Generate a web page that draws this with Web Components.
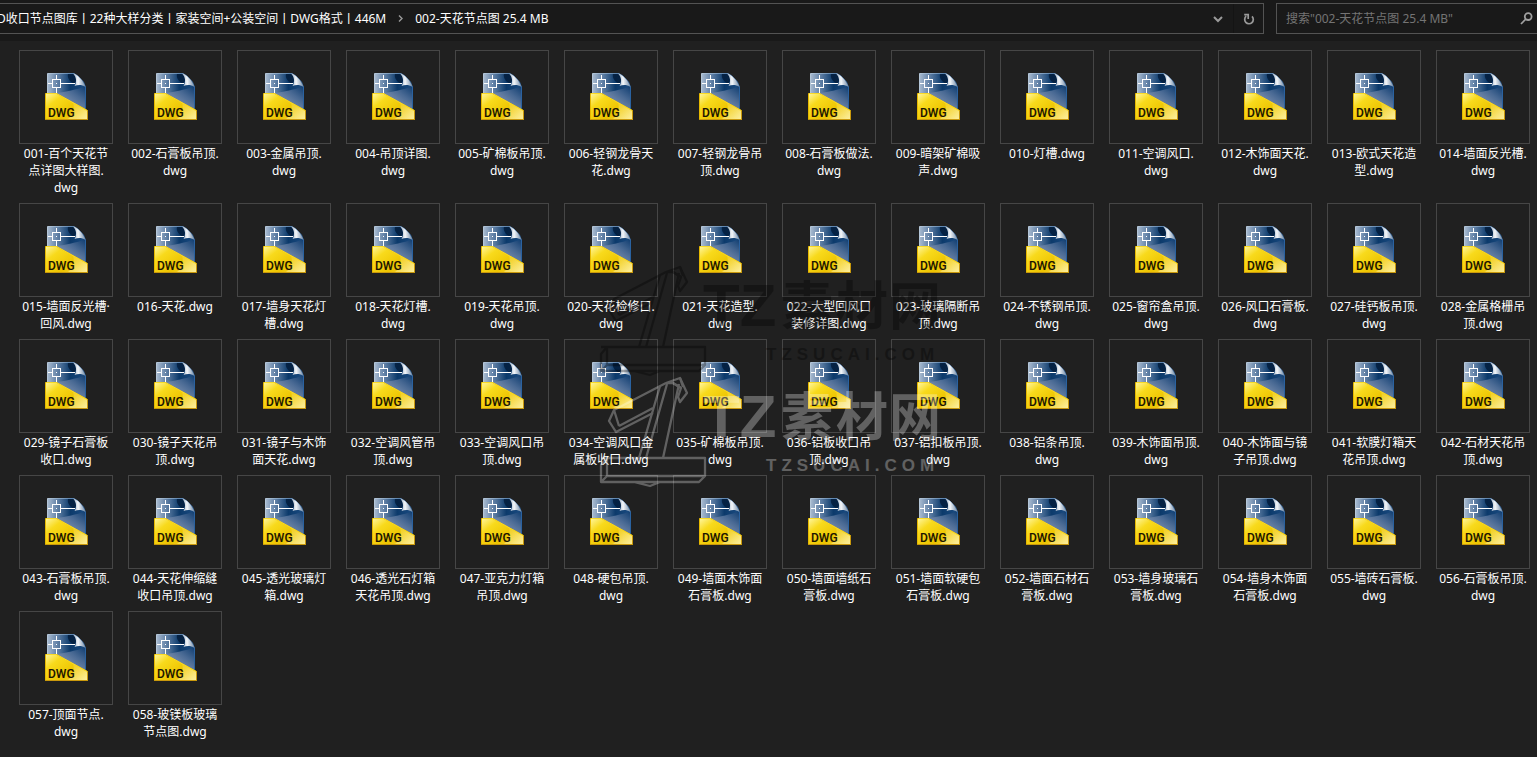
<!DOCTYPE html>
<html lang="zh-CN">
<head>
<meta charset="utf-8">
<meta name="viewport" content="width=device-width, initial-scale=1">
<title>002-天花节点图 25.4 MB</title>
<style>
  html, body { margin: 0; min-height: 100%; background: #202020; }
  body { font: 12px/17px "Noto Sans", "Noto Sans CJK SC", sans-serif; color: #fff; overflow-x: hidden; }
</style>
</head>
<body>
<explorer-window>
  <address-bar slot="bar"></address-bar>
  <search-box slot="bar"></search-box>
  <file-grid></file-grid>
  <water-mark slot="overlay"></water-mark>
</explorer-window>

<script>
const define = (name, html, setup) => {
  const template = document.createElement('template');
  template.innerHTML = html;
  customElements.define(name, class extends HTMLElement {
    constructor() {
      super();
      this.attachShadow({ mode: 'open' }).append(template.content.cloneNode(true));
      if (setup) setup(this.shadowRoot);
    }
  });
};

define('explorer-window', `
  <style>
    :host { display: block; position: relative; min-height: 100vh; background: #202020; overflow: hidden; }
    header { display: flex; gap: 12px; height: 31px; padding: 3px 0 7px; background: #191919; }
    main { padding: 9px 0 17px 19px; }
  </style>
  <header><slot name="bar"></slot></header>
  <main><slot></slot></main>
  <slot name="overlay"></slot>`);

define('address-bar', `
  <style>
    :host { display: flex; flex: 1; min-width: 0; box-sizing: border-box; border: 1px solid #535353; border-left: 0; overflow: hidden; }
    nav { display: flex; flex: 1; align-items: center; gap: 10px; margin-left: -3px; padding-bottom: 1px; min-width: 0; white-space: nowrap; }
    a { color: #fff; text-decoration: none; }
    button { width: 30px; padding: 0; border: 0; background: none; display: flex; align-items: center; justify-content: center; }
    .refresh { border-left: 1px solid #141414; }
    svg { display: block; fill: none; stroke: #9a9a9a; }
  </style>
  <nav aria-label="地址">
    <a href="#library">D收口节点图库丨22种大样分类丨家装空间+公装空间丨DWG格式丨446M</a>
    <svg width="9" height="9" viewBox="0 0 9 9" stroke-width="1.4"><path d="M3 1.5 6 4.5 3 7.5"/></svg>
    <a href="#folder">002-天花节点图 25.4 MB</a>
  </nav>
  <button type="button" aria-label="上一个位置"><svg width="10" height="10" viewBox="0 0 10 10" stroke-width="2"><path d="M1 3 5 7 9 3"/></svg></button>
  <button type="button" class="refresh" aria-label="刷新"><svg width="12" height="14" viewBox="0 0 12 14" stroke-width="1.7"><path d="M3.2 4.2A4.3 4.3 0 1 0 9 4.4M1.2 2.7H5.2V7"/></svg></button>`);

define('search-box', `
  <style>
    :host { display: flex; align-items: center; flex: 0 0 261px; box-sizing: border-box; border: 1px solid #535353; border-right: 0; padding: 0 4px 0 9px; }
    input { flex: 1; min-width: 0; padding: 0; border: 0; outline: 0; background: none; font: inherit; color: #fff; }
    input::placeholder { color: #747474; opacity: 1; }
    button { padding: 0; border: 0; background: none; }
    svg { display: block; fill: none; stroke: #a0a0a0; }
  </style>
  <input type="search" aria-label="搜索" placeholder='搜索"002-天花节点图 25.4 MB"'>
  <button type="button" aria-label="开始搜索"><svg width="13" height="13" viewBox="0 0 13 13" stroke-width="1.8"><circle cx="8.2" cy="4.6" r="3.4"/><path d="M5.8 7 1 12"/></svg></button>`);

define('dwg-icon', `
  <style>
    :host { display: block; width: 44px; height: 48px; }
    svg { display: block; }
    text { font: 500 12px Roboto, sans-serif; fill: #1a1400; stroke: #1a1400; stroke-width: .1; }
  </style>
  <svg width="44" height="48" viewBox="-1 0 44 48" aria-hidden="true">
    <defs>
      <linearGradient id="sheet" x1="0" y1="0" x2="1" y2="0">
        <stop offset="0" stop-color="#a9bbd0"/><stop offset=".25" stop-color="#6483a8"/>
        <stop offset=".6" stop-color="#0c3a6b"/><stop offset="1" stop-color="#1b4c82"/>
      </linearGradient>
      <linearGradient id="sheen" x1="1" y1="0" x2=".3" y2=".8">
        <stop offset="0" stop-color="#123f72"/><stop offset=".45" stop-color="#4a6a94"/><stop offset="1" stop-color="#8496b3"/>
      </linearGradient>
      <linearGradient id="edge" x1="0" y1="0" x2="1" y2="0">
        <stop offset="0" stop-color="#b4c6d8"/><stop offset="1" stop-color="#2a5e96"/>
      </linearGradient>
      <linearGradient id="curl" x1="0" y1=".5" x2="1" y2=".45">
        <stop offset="0" stop-color="#8fa3ba"/><stop offset=".4" stop-color="#f4f7fa"/><stop offset="1" stop-color="#6d87a5"/>
      </linearGradient>
      <linearGradient id="gold" x1="0" y1="0" x2="1" y2=".8">
        <stop offset="0" stop-color="#fff6a0"/><stop offset=".28" stop-color="#f8da1c"/><stop offset=".7" stop-color="#edc400"/><stop offset="1" stop-color="#f3d64a"/>
      </linearGradient>
      <linearGradient id="glow" x1="0" y1="0" x2="1" y2="1">
        <stop offset="0" stop-color="#f2cb10"/><stop offset="1" stop-color="#fff6b5"/>
      </linearGradient>
    </defs>
    <path d="M2.500 .500H29L33 3 38.500 9 40.500 14V40H2.500Z" fill="url(#sheet)" stroke="url(#edge)"/>
    <path d="M12 20C20 19 32 16.500 40 13.500V38Z" fill="url(#sheen)"/>
    <path d="M40.500 14V37" stroke="#2a62a0"/>
    <path d="M23 1H29C31.500 4 31.500 8 29.500 11C25 9 22 5 23 1Z" fill="#031c3a" opacity=".8"/>
    <path d="M28 .500C33 1.500 38.500 8 40.500 14C37 11.500 33 11.500 29.500 13C32 9 31.500 4 28 .500Z" fill="url(#curl)"/>
    <path d="M3 10.500H7.500M15.500 10.500H30M11.500 2V6.500M11.500 14.500V20" stroke="#fff" fill="none"/>
    <rect x="7.500" y="6.500" width="8" height="8" fill="none" stroke="#fff"/>
    <rect x="11" y="10" width="1" height="1" fill="#fff"/>
    <path d="M.5 20.500H11.500L42.500 37.500V46.500H.5Z" fill="url(#gold)" stroke="#e6b800"/>
    <path d="M28 30 42 38V46H23C28 42 30 36 28 30Z" fill="url(#glow)" opacity=".75"/>
    <path d="M1 20.500H11.500L42 37.500" fill="none" stroke="#ffe22e" stroke-width=".8"/>
    <path d="M.5 46.500H42.500V38" fill="none" stroke="#c9980c"/>
    <text x="3" y="44">DWG</text>
  </svg>`);

define('file-tile', `
  <style>
    :host { display: block; }
    figure { margin: 0; }
    .thumb { display: flex; align-items: center; justify-content: center; box-sizing: border-box; height: 94px; border: 1px solid #464646; }
    figcaption { margin-top: 1px; min-height: 34px; text-align: center; white-space: nowrap; }
    ::slotted(span) { display: block; }
  </style>
  <figure>
    <div class="thumb"><dwg-icon></dwg-icon></div>
    <figcaption><slot></slot></figcaption>
  </figure>`);

/* File names, one array entry per file; "/" marks where a name wraps. */
const files = [
  '001-百个天花节/点详图大样图./dwg', '002-石膏板吊顶./dwg', '003-金属吊顶./dwg', '004-吊顶详图./dwg', '005-矿棉板吊顶./dwg',
  '006-轻钢龙骨天/花.dwg', '007-轻钢龙骨吊/顶.dwg', '008-石膏板做法./dwg', '009-暗架矿棉吸/声.dwg', '010-灯槽.dwg',
  '011-空调风口./dwg', '012-木饰面天花./dwg', '013-欧式天花造/型.dwg', '014-墙面反光槽./dwg',
  '015-墙面反光槽·/回风.dwg', '016-天花.dwg', '017-墙身天花灯/槽.dwg', '018-天花灯槽./dwg', '019-天花吊顶./dwg',
  '020-天花检修口./dwg', '021-天花造型./dwg', '022-大型回风口/装修详图.dwg', '023-玻璃隔断吊/顶.dwg', '024-不锈钢吊顶./dwg',
  '025-窗帘盒吊顶./dwg', '026-风口石膏板./dwg', '027-硅钙板吊顶./dwg', '028-金属格栅吊/顶.dwg',
  '029-镜子石膏板/收口.dwg', '030-镜子天花吊/顶.dwg', '031-镜子与木饰/面天花.dwg', '032-空调风管吊/顶.dwg', '033-空调风口吊/顶.dwg',
  '034-空调风口金/属板收口.dwg', '035-矿棉板吊顶./dwg', '036-铝板收口吊/顶.dwg', '037-铝扣板吊顶./dwg', '038-铝条吊顶./dwg',
  '039-木饰面吊顶./dwg', '040-木饰面与镜/子吊顶.dwg', '041-软膜灯箱天/花吊顶.dwg', '042-石材天花吊/顶.dwg',
  '043-石膏板吊顶./dwg', '044-天花伸缩缝/收口吊顶.dwg', '045-透光玻璃灯/箱.dwg', '046-透光石灯箱/天花吊顶.dwg', '047-亚克力灯箱/吊顶.dwg',
  '048-硬包吊顶./dwg', '049-墙面木饰面/石膏板.dwg', '050-墙面墙纸石/膏板.dwg', '051-墙面软硬包/石膏板.dwg', '052-墙面石材石/膏板.dwg',
  '053-墙身玻璃石/膏板.dwg', '054-墙身木饰面/石膏板.dwg', '055-墙砖石膏板./dwg', '056-石膏板吊顶./dwg',
  '057-顶面节点./dwg', '058-玻镁板玻璃/节点图.dwg'
];

define('file-grid', `
  <style>
    :host { display: grid; grid-template-columns: repeat(auto-fill, 94px); gap: 7px 15px; }
  </style>`, root => {
  for (const name of files) {
    const tile = document.createElement('file-tile');
    for (const line of name.split('/')) {
      const span = document.createElement('span');
      span.textContent = line;
      tile.append(span);
    }
    root.append(tile);
  }
});

/* Two stacked copies of the site mark: a dark one above a light one. */
const mark = `
  <svg width="350" height="124" viewBox="0 0 350 124">
    <g fill="none" stroke="currentColor" stroke-width="2.300" stroke-linejoin="round">
      <path d="M74 15 22 42 17 53 24 64 61 45M22 42 27 58M27 58 61 40M17 53 22 42M74 15 88 10 95 25 88 34 86 29 89 20 81 15 74 15"/>
      <path d="M68 18 47 90M75 16 54 90M87 16 71 90M81 15 89 20M88 10 91 19"/>
      <path d="M9 90H113V108L107 114H9V97L15 90M15 90V108M15 108H113M9 114 15 108M42 114 58 118 68 114"/>
    </g>
    <text class="latin" x="111" y="69">TZ</text>
    <text class="han" x="189" y="68">素</text>
    <text class="han" x="244" y="68">材</text>
    <text class="han" x="297" y="68">网</text>
    <text class="site" x="174" y="103">TZSUCAI.COM</text>
  </svg>`;

define('water-mark', `
  <style>
    :host { position: absolute; left: 592px; top: 257px; pointer-events: none; }
    div { height: 111px; }
    svg { display: block; fill: currentColor; }
    .dark { color: #000; opacity: .32; }
    .light { color: #fff; opacity: .29; }
    .latin { font: bold 60px "Liberation Sans", sans-serif; }
    .han { font: bold 52px "Noto Sans CJK SC", sans-serif; }
    .site { font: bold 17px "Liberation Sans", sans-serif; letter-spacing: 5px; }
  </style>
  <div class="dark">${mark}</div>
  <div class="light">${mark}</div>`);
</script>
</body>
</html>
